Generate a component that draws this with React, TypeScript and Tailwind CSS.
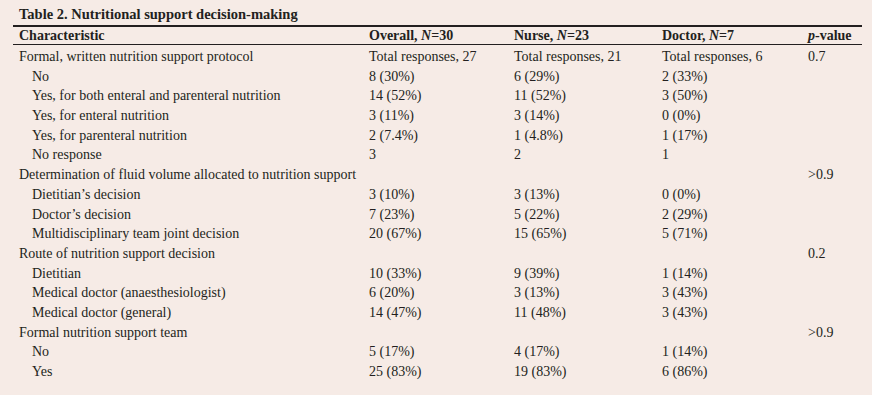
const rows: { label: string; indent?: boolean; vals: string[]; p?: string }[] = [
  { label: "Formal, written nutrition support protocol", vals: ["Total responses, 27", "Total responses, 21", "Total responses, 6"], p: "0.7" },
  { label: "No", indent: true, vals: ["8 (30%)", "6 (29%)", "2 (33%)"] },
  { label: "Yes, for both enteral and parenteral nutrition", indent: true, vals: ["14 (52%)", "11 (52%)", "3 (50%)"] },
  { label: "Yes, for enteral nutrition", indent: true, vals: ["3 (11%)", "3 (14%)", "0 (0%)"] },
  { label: "Yes, for parenteral nutrition", indent: true, vals: ["2 (7.4%)", "1 (4.8%)", "1 (17%)"] },
  { label: "No response", indent: true, vals: ["3", "2", "1"] },
  { label: "Determination of fluid volume allocated to nutrition support", vals: ["", "", ""], p: ">0.9" },
  { label: "Dietitian\u2019s decision", indent: true, vals: ["3 (10%)", "3 (13%)", "0 (0%)"] },
  { label: "Doctor\u2019s decision", indent: true, vals: ["7 (23%)", "5 (22%)", "2 (29%)"] },
  { label: "Multidisciplinary team joint decision", indent: true, vals: ["20 (67%)", "15 (65%)", "5 (71%)"] },
  { label: "Route of nutrition support decision", vals: ["", "", ""], p: "0.2" },
  { label: "Dietitian", indent: true, vals: ["10 (33%)", "9 (39%)", "1 (14%)"] },
  { label: "Medical doctor (anaesthesiologist)", indent: true, vals: ["6 (20%)", "3 (13%)", "3 (43%)"] },
  { label: "Medical doctor (general)", indent: true, vals: ["14 (47%)", "11 (48%)", "3 (43%)"] },
  { label: "Formal nutrition support team", vals: ["", "", ""], p: ">0.9" },
  { label: "No", indent: true, vals: ["5 (17%)", "4 (17%)", "1 (14%)"] },
  { label: "Yes", indent: true, vals: ["25 (83%)", "19 (83%)", "6 (86%)"] },
];

const cols = "grid grid-cols-[350px_145px_148px_146px_1fr] pl-[6px]";

export default function App() {
  return (
    <div className="h-[395px] w-[872px] bg-[#f6ebe6] pl-[13px] pr-[10px] pt-[4px] font-['Liberation_Serif',serif] text-[14px] text-[#231f20]">
      <h1 className="pl-[6px] text-[14.5px] font-bold leading-[20px]">Table 2. Nutritional support decision-making</h1>
      <div className="mt-[1px] border-t-2 border-[#231f20]" />
      <div className={`${cols} h-[18px] items-center border-b border-[#231f20] font-bold leading-[18px]`}>
        <span>Characteristic</span>
        <span>Overall, <i>N</i>=30</span>
        <span>Nurse, <i>N</i>=23</span>
        <span>Doctor, <i>N</i>=7</span>
        <span><i>p</i>-value</span>
      </div>
      <div className="pt-[2px]">
        {rows.map((r, i) => (
          <div key={i} className={`${cols} h-[19.7px] items-center leading-[19.7px]`}>
            <span className={r.indent ? "pl-[13px]" : ""}>{r.label}</span>
            {r.vals.map((v, j) => (
              <span key={j}>{v}</span>
            ))}
            <span>{r.p ?? ""}</span>
          </div>
        ))}
      </div>
    </div>
  );
}
